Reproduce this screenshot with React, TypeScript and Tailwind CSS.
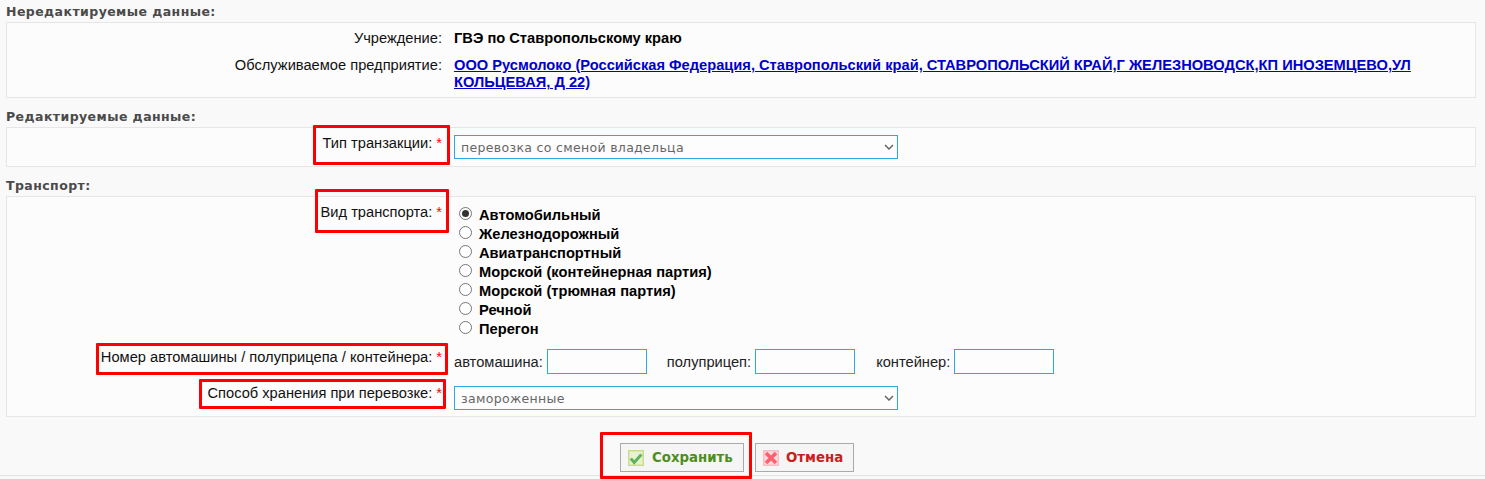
const transports = [
  'Автомобильный',
  'Железнодорожный',
  'Авиатранспортный',
  'Морской (контейнерная партия)',
  'Морской (трюмная партия)',
  'Речной',
  'Перегон',
];

function Title({ children }: { children: React.ReactNode }) {
  return (
    <h3 className="h-[16px] pl-[6px] font-['DejaVu_Sans',sans-serif] text-[12.5px] leading-[16px] font-bold tracking-[0.43px] text-[#4a4a4a]">
      {children}
    </h3>
  );
}

function Star() {
  return <span className="ml-[4px] text-[#ff0000]">*</span>;
}

// red annotation frame drawn over a label
function Marked({ className, children }: { className: string; children: React.ReactNode }) {
  return (
    <span className="relative inline-block">
      {children}
      <span className={`absolute rounded-[1px] border-[3px] border-[#ff0000] ${className}`} />
    </span>
  );
}

function Select({ value }: { value: string }) {
  return (
    <div className="flex h-[24px] w-[444px] items-center justify-between border border-[#2ea8e0] bg-[#fdfdfd] pr-[3px] pl-[6px] font-['DejaVu_Sans',sans-serif] text-[12.5px] tracking-[0.32px] text-[#666]">
      <span className="pt-[2px]">{value}</span>
      <svg width="10" height="6" viewBox="0 0 10 6" fill="none" stroke="#666" strokeWidth="1.5">
        <path d="M1 1l4 4 4-4" />
      </svg>
    </div>
  );
}

function Radio({ checked }: { checked?: boolean }) {
  return (
    <span className="flex h-[13px] w-[13px] -translate-y-[1px] items-center justify-center rounded-full border border-[#767676] bg-white">
      {checked && <span className="h-[7px] w-[7px] rounded-full bg-[#333]" />}
    </span>
  );
}

function PlateInput() {
  return <div className="h-[25px] w-[100px] border border-[#2ea8e0] bg-[#fdfdfd]" />;
}

export default function App() {
  return (
    <div className="flex h-[479px] w-[1485px] flex-col overflow-hidden bg-[#f9f9f9] font-['Liberation_Sans',Arial,sans-serif] text-[14.67px] text-[#111]">
      <div className="h-[4px]" />
      <Title>Нередактируемые данные:</Title>
      <div className="mx-[6px] mt-[2px] h-[76px] w-[1470px] border border-[#e6e6e6] bg-[#fcfcfc]">
        <div className="grid grid-cols-[435px_1fr] gap-x-[12px] pt-[6px] leading-[17px]">
          <div className="h-[28px] pt-[1px] text-right">Учреждение:</div>
          <div className="pt-[1px] font-bold text-black">ГВЭ по Ставропольскому краю</div>
          <div className="text-right">Обслуживаемое предприятие:</div>
          <a className="w-[980px] font-bold text-[#0000cc] underline">
            ООО Русмолоко (Российская Федерация, Ставропольский край, СТАВРОПОЛЬСКИЙ КРАЙ,Г ЖЕЛЕЗНОВОДСК,КП ИНОЗЕМЦЕВО,УЛ КОЛЬЦЕВАЯ, Д 22)
          </a>
        </div>
      </div>

      <div className="h-[11px]" />
      <Title>Редактируемые данные:</Title>
      <div className="mx-[6px] mt-[2px] h-[40px] w-[1470px] border border-[#e6e6e6] bg-[#fcfcfc]">
        <div className="grid grid-cols-[435px_1fr] gap-x-[12px] pt-[7px]">
          <div className="text-right leading-[17px]">
            <Marked className="-top-[10px] -right-[8px] -bottom-[13px] -left-[10px]">
              Тип транзакции:<Star />
            </Marked>
          </div>
          <Select value="перевозка со сменой владельца" />
        </div>
      </div>

      <div className="h-[11px]" />
      <Title>Транспорт:</Title>
      <div className="mx-[6px] mt-[2px] h-[221px] w-[1470px] border border-[#e6e6e6] bg-[#fcfcfc]">
        <div className="grid grid-cols-[435px_1fr] gap-x-[12px] pt-[7px]">
          <div className="text-right leading-[17px]">
            <Marked className="-top-[15px] -right-[7px] -bottom-[12px] -left-[6px]">
              Вид транспорта:<Star />
            </Marked>
          </div>
          <div className="flex flex-col pt-[1px] pl-[5px] font-bold">
            {transports.map((t, i) => (
              <label key={t} className="flex h-[19px] items-center gap-[7px] text-black">
                <Radio checked={i === 0} />
                {t}
              </label>
            ))}
          </div>

          <div className="mt-[11px] text-right leading-[17px]">
            <Marked className="-top-[6px] -right-[6px] -bottom-[9px] -left-[5px]">
              Номер автомашины / полуприцепа / контейнера:<Star />
            </Marked>
          </div>
          <div className="mt-[11px] flex items-center text-[#222]">
            <span className="mr-[4px]">автомашина:</span>
            <PlateInput />
            <span className="mr-[4px] ml-[20px]">полуприцеп:</span>
            <PlateInput />
            <span className="mr-[4px] ml-[21px]">контейнер:</span>
            <PlateInput />
          </div>

          <div className="mt-[11px] text-right leading-[17px]">
            <Marked className="-top-[6px] -right-[4px] -bottom-[7px] -left-[8px]">
              Способ хранения при перевозке:<Star />
            </Marked>
          </div>
          <div className="mt-[12px]">
            <Select value="замороженные" />
          </div>
        </div>
      </div>

      <div className="mt-[26px] flex h-[29px] pl-[620px] font-['DejaVu_Sans',sans-serif] text-[13.33px] font-bold">
        <button className="relative flex w-[124px] items-center gap-[8px] border border-[#aaa] bg-[#f5f5f5] pl-[7px] text-[#4e8f1c]">
          <svg width="16" height="16" viewBox="0 0 16 16">
            <rect x="0.75" y="0.75" width="14.5" height="14.5" fill="#e8f3cc" stroke="#c8dc8c" strokeWidth="1.5" />
            <path d="M2.8 8.6l3.4 3.8 7.2-8" fill="none" stroke="#5fb25f" strokeWidth="3" />
          </svg>
          Сохранить
          <span className="absolute -top-[12px] -right-[9px] -bottom-[8px] -left-[21px] rounded-[1px] border-[3px] border-[#ff0000]" />
        </button>
        <button className="ml-[11px] flex w-[99px] items-center gap-[7px] border border-[#aaa] bg-[#f5f5f5] pl-[7px] text-[#c8201c]">
          <svg width="16" height="16" viewBox="0 0 16 16">
            <rect x="0.75" y="0.75" width="14.5" height="14.5" fill="#fddcdc" stroke="#f8bcc4" strokeWidth="1.5" />
            <path d="M3 3l10 10M13 3L3 13" stroke="#ff5f6e" strokeWidth="3.6" />
          </svg>
          Отмена
        </button>
      </div>
      <div className="mt-[3px] border-t border-[#e2e2e2]" />
    </div>
  );
}
